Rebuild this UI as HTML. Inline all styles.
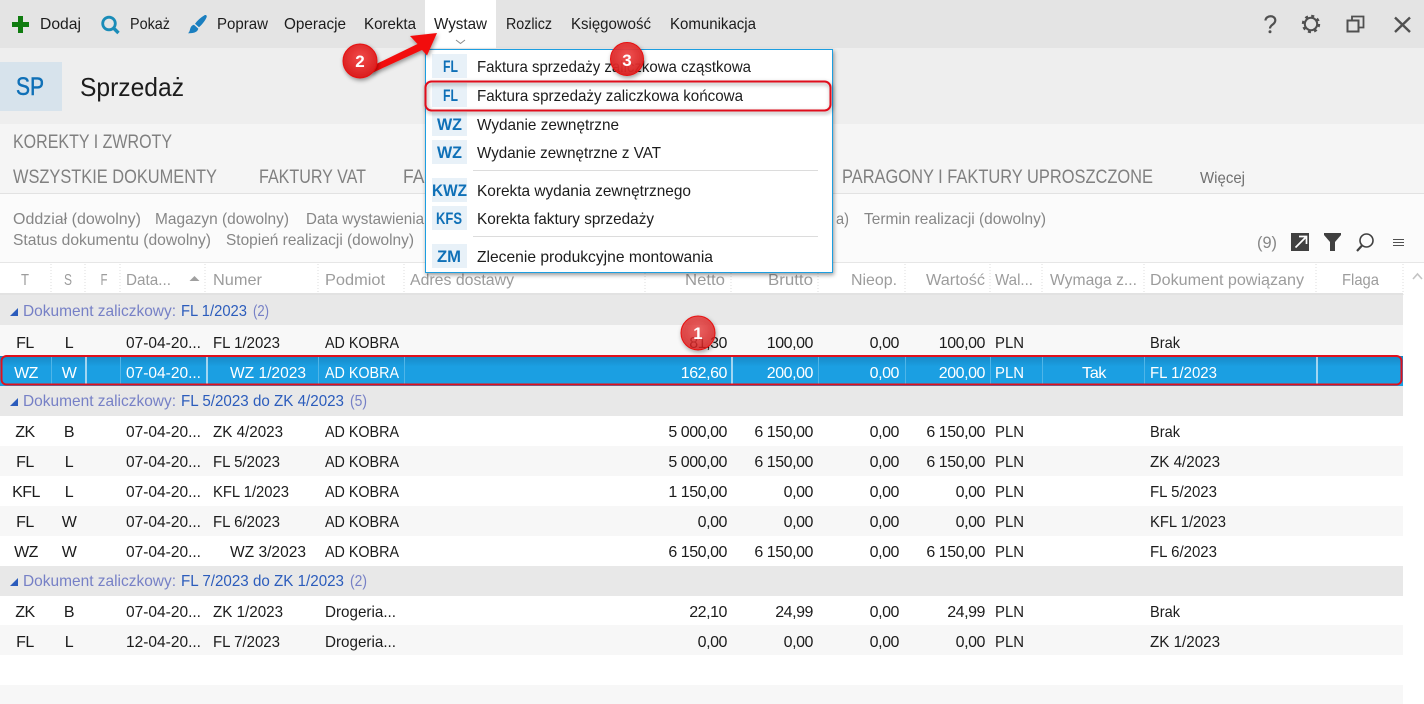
<!DOCTYPE html>
<html lang="pl"><head><meta charset="utf-8"><title>Sprzedaż</title>
<style>
html,body{margin:0;padding:0;background:#fff;overflow:hidden}
svg{display:block;font-family:"Liberation Sans",sans-serif;font-size:16px}
text{fill:#1c1c1c}
.g{fill:#808080;font-size:19px}
.f{fill:#868686;font-size:16px}
.h{fill:#9c9c9c;font-size:16px}
.r{text-anchor:end;letter-spacing:-.45px}
.c{text-anchor:middle;letter-spacing:-.5px}
.w text,text.w{fill:#fff}
.a{fill:#7680c6}
.b{fill:#2b5cbc}
.m{font-size:16px}
.k{fill:#0f70b7;font-weight:bold;font-size:17px;text-anchor:middle}
.s{stroke:#dcdcdc;stroke-dasharray:1 2;stroke-width:1}
.n{fill:#fff;font-weight:bold;font-size:17px;text-anchor:middle}
</style></head><body>
<svg width="1424" height="704" viewBox="0 0 1424 704" xmlns="http://www.w3.org/2000/svg">
<defs>
<linearGradient id="sel" x1="0" y1="0" x2="0" y2="1"><stop offset="0" stop-color="#1788c6"/><stop offset=".35" stop-color="#1b9fe2"/><stop offset="1" stop-color="#1b9fe2"/></linearGradient>
<radialGradient id="red" cx=".5" cy=".4" r=".6"><stop offset="0" stop-color="#f04a4a"/><stop offset="1" stop-color="#d91c1c"/></radialGradient>
<filter id="sh" x="-20%" y="-20%" width="140%" height="140%"><feDropShadow dx="1" dy="2" stdDeviation="2" flood-color="#000" flood-opacity=".4"/></filter>
</defs>
<!-- bands -->
<rect x="0" y="0" width="1424" height="48" fill="#e4e4e4"/>
<rect x="425" y="0" width="71" height="49" fill="#fff"/>
<rect x="0" y="48" width="1424" height="76" fill="#eeeeee"/>
<rect x="0" y="124" width="1424" height="69" fill="#f5f5f5"/>
<rect x="0" y="193" width="1424" height="1" fill="#e2e2e2"/>
<rect x="0" y="194" width="1424" height="68" fill="#fbfbfb"/>
<rect x="0" y="262" width="1424" height="1" fill="#e6e6e6"/>
<rect x="0" y="263" width="1424" height="441" fill="#fff"/>

<!-- toolbar icons -->
<path d="M18 16h5v6h6v5h-6v6h-5v-6h-6v-5h6z" fill="#107c10"/>
<circle cx="109" cy="23.500" r="6.300" fill="none" stroke="#1a8cb8" stroke-width="2.800"/>
<path d="M113.500 28l5 5" stroke="#1a8cb8" stroke-width="3.400" fill="none"/>
<path d="M204.500 15.200c1.600-.6 2.700.6 2.100 2.100-1.600 3.600-4.300 7.200-7.600 10l-4-3.600c2.600-3.500 5.800-6.400 9.500-8.500zM194 24.700l4.300 3.900c-.4 2.700-3.400 4.900-10.300 4.600 2-1.500 1.600-3.300 2.600-5.600.6-1.500 1.800-2.700 3.400-2.900z" fill="#1a7fc0"/>
<!-- toolbar text -->
<text x="40" y="29" textLength="41" lengthAdjust="spacingAndGlyphs">Dodaj</text>
<text x="130" y="29" textLength="40" lengthAdjust="spacingAndGlyphs">Pokaż</text>
<text x="217" y="29" textLength="51" lengthAdjust="spacingAndGlyphs">Popraw</text>
<text x="284" y="29" textLength="62" lengthAdjust="spacingAndGlyphs">Operacje</text>
<text x="364" y="29" textLength="52" lengthAdjust="spacingAndGlyphs">Korekta</text>
<text x="434" y="29" textLength="53" lengthAdjust="spacingAndGlyphs">Wystaw</text>
<text x="506" y="29" textLength="46" lengthAdjust="spacingAndGlyphs">Rozlicz</text>
<text x="571" y="29" textLength="80" lengthAdjust="spacingAndGlyphs">Księgowość</text>
<text x="670" y="29" textLength="86" lengthAdjust="spacingAndGlyphs">Komunikacja</text>
<path d="M456 40l4.500 3.500 4.500-3.500" fill="none" stroke="#8a8a8a"/>
<!-- window icons -->
<path d="M1265.500 20.500c.2-5.500 9.800-5.800 9.800-.2 0 4.500-5.300 4.200-5.300 8.200" fill="none" stroke="#505050" stroke-width="2.200"/>
<circle cx="1270" cy="31.800" r="1.500" fill="#505050"/>
<circle cx="1311" cy="24" r="6.200" fill="none" stroke="#505050" stroke-width="2"/>
<circle cx="1311" cy="24" r="8" fill="none" stroke="#505050" stroke-width="2.400" stroke-dasharray="3 3.280"/>
<rect x="1347.500" y="20.500" width="11" height="11" fill="#e4e4e4" stroke="#505050" stroke-width="2"/>
<path d="M1352 19.500v-3h11.500v11h-4" fill="none" stroke="#505050" stroke-width="1.800"/>
<path d="M1395 17.500l15 14.500M1410 17.500l-15 14.500" stroke="#505050" stroke-width="2.400" fill="none"/>

<!-- title -->
<rect x="0" y="62" width="62" height="49" fill="#d7e3ec"/>
<text x="16" y="95" style="font-size:25px;fill:#0f70b7;stroke:#0f70b7;stroke-width:.5" textLength="28" lengthAdjust="spacingAndGlyphs">SP</text>
<text x="80" y="96" style="font-size:26px" textLength="104" lengthAdjust="spacingAndGlyphs">Sprzedaż</text>

<!-- tabs -->
<text class="g" x="13" y="148" textLength="159" lengthAdjust="spacingAndGlyphs">KOREKTY I ZWROTY</text>
<text class="g" x="13" y="183" textLength="204" lengthAdjust="spacingAndGlyphs">WSZYSTKIE DOKUMENTY</text>
<text class="g" x="259" y="183" textLength="107" lengthAdjust="spacingAndGlyphs">FAKTURY VAT</text>
<text class="g" x="403" y="183" textLength="33" lengthAdjust="spacingAndGlyphs">FAK</text>
<text class="g" x="842" y="183" textLength="311" lengthAdjust="spacingAndGlyphs">PARAGONY I FAKTURY UPROSZCZONE</text>
<text x="1200" y="183" style="fill:#707070" textLength="45" lengthAdjust="spacingAndGlyphs">Więcej</text>

<!-- filters -->
<text class="f" x="13" y="224" textLength="128" lengthAdjust="spacingAndGlyphs">Oddział (dowolny)</text>
<text class="f" x="155" y="224" textLength="134" lengthAdjust="spacingAndGlyphs">Magazyn (dowolny)</text>
<text class="f" x="306" y="224" textLength="118" lengthAdjust="spacingAndGlyphs">Data wystawienia</text>
<text class="f" x="836" y="224" textLength="13" lengthAdjust="spacingAndGlyphs">a)</text>
<text class="f" x="864" y="224" textLength="182" lengthAdjust="spacingAndGlyphs">Termin realizacji (dowolny)</text>
<text class="f" x="13" y="245" textLength="198" lengthAdjust="spacingAndGlyphs">Status dokumentu (dowolny)</text>
<text class="f" x="226" y="245" textLength="188" lengthAdjust="spacingAndGlyphs">Stopień realizacji (dowolny)</text>
<text class="f" x="1257" y="248" style="font-size:17px" textLength="20" lengthAdjust="spacingAndGlyphs">(9)</text>
<rect x="1291" y="233" width="18" height="18" fill="#404040"/>
<path d="M1295.500 247.500l10-10M1299 236.500h7.500v7.500" stroke="#fff" stroke-width="1.700" fill="none"/>
<path d="M1324 233h17v2l-6 7v9h-5v-9l-6-7z" fill="#404040"/>
<circle cx="1366.500" cy="240.500" r="6.500" fill="none" stroke="#404040" stroke-width="1.600"/>
<path d="M1362 245.500l-5 5.500" stroke="#404040" stroke-width="2.200" fill="none"/>
<path d="M1393 239.500h11M1393 242.500h11M1393 245.500h11" stroke="#505050" fill="none"/>

<!-- grid header -->
<text class="h" x="21" y="285" textLength="8" lengthAdjust="spacingAndGlyphs">T</text>
<text class="h" x="64" y="285" textLength="8" lengthAdjust="spacingAndGlyphs">S</text>
<text class="h" x="100.500" y="285" textLength="7" lengthAdjust="spacingAndGlyphs">F</text>
<text class="h" x="126" y="285" textLength="45" lengthAdjust="spacingAndGlyphs">Data...</text>
<path d="M189.500 281l5-5 5 5z" fill="#a0a0a0"/>
<text class="h" x="213" y="285" textLength="49" lengthAdjust="spacingAndGlyphs">Numer</text>
<text class="h" x="325" y="285" textLength="60" lengthAdjust="spacingAndGlyphs">Podmiot</text>
<text class="h" x="410" y="285" textLength="104" lengthAdjust="spacingAndGlyphs">Adres dostawy</text>
<text class="h" x="685" y="285" textLength="40" lengthAdjust="spacingAndGlyphs">Netto</text>
<text class="h" x="768" y="285" textLength="45" lengthAdjust="spacingAndGlyphs">Brutto</text>
<text class="h" x="851" y="285" textLength="46" lengthAdjust="spacingAndGlyphs">Nieop.</text>
<text class="h" x="926" y="285" textLength="59" lengthAdjust="spacingAndGlyphs">Wartość</text>
<text class="h" x="995" y="285" textLength="38" lengthAdjust="spacingAndGlyphs">Wal...</text>
<text class="h" x="1050" y="285" textLength="87" lengthAdjust="spacingAndGlyphs">Wymaga z...</text>
<text class="h" x="1150" y="285" textLength="154" lengthAdjust="spacingAndGlyphs">Dokument powiązany</text>
<text class="h" x="1342" y="285" textLength="37" lengthAdjust="spacingAndGlyphs">Flaga</text>
<path d="M1413 279l4.500-5 4.500 5" fill="none" stroke="#c4c4c4" stroke-width="1.600"/>
<g class="s"><path d="M51 264v31M85 264v31M120 264v31M205 264v31M318 264v31M404 264v31M645 264v31M731 264v31M818 264v31M905 264v31M990 264v31M1042 264v31M1144 264v31M1316 264v31M1403 264v31"/></g>
<rect x="0" y="293" width="1403" height="2" fill="#e2e2e2"/>

<!-- row backgrounds -->
<rect x="0" y="295" width="1403" height="30" fill="#e8e8e8"/>
<rect x="0" y="325" width="1403" height="31" fill="#f8f8f8"/>
<rect x="0" y="356" width="1403" height="30" fill="url(#sel)"/>
<rect x="0" y="386" width="1403" height="30" fill="#e8e8e8"/>
<rect x="0" y="446" width="1403" height="30" fill="#f7f7f7"/>
<rect x="0" y="506" width="1403" height="30" fill="#f7f7f7"/>
<rect x="0" y="566" width="1403" height="30" fill="#e8e8e8"/>
<rect x="0" y="625" width="1403" height="30" fill="#f7f7f7"/>
<rect x="0" y="685" width="1403" height="19" fill="#f7f7f7"/>

<!-- groups -->
<path d="M10 316l8-8v8z" fill="#2b5cbc"/>
<text class="a" x="23" y="316" textLength="153" lengthAdjust="spacingAndGlyphs">Dokument zaliczkowy:</text>
<text class="b" x="181" y="316" textLength="66" lengthAdjust="spacingAndGlyphs">FL 1/2023</text>
<text class="a" x="253" y="316" textLength="16" lengthAdjust="spacingAndGlyphs">(2)</text>
<path d="M10 406l8-8v8z" fill="#2b5cbc"/>
<text class="a" x="23" y="406" textLength="153" lengthAdjust="spacingAndGlyphs">Dokument zaliczkowy:</text>
<text class="b" x="181" y="406" textLength="163" lengthAdjust="spacingAndGlyphs">FL 5/2023 do ZK 4/2023</text>
<text class="a" x="350" y="406" textLength="17" lengthAdjust="spacingAndGlyphs">(5)</text>
<path d="M10 586l8-8v8z" fill="#2b5cbc"/>
<text class="a" x="23" y="586" textLength="153" lengthAdjust="spacingAndGlyphs">Dokument zaliczkowy:</text>
<text class="b" x="181" y="586" textLength="163" lengthAdjust="spacingAndGlyphs">FL 7/2023 do ZK 1/2023</text>
<text class="a" x="350" y="586" textLength="17" lengthAdjust="spacingAndGlyphs">(2)</text>

<!-- row 1 -->
<g>
<text class="c" x="25" y="348">FL</text><text class="c" x="69" y="348">L</text>
<text x="126" y="348" textLength="75" lengthAdjust="spacingAndGlyphs">07-04-20...</text>
<text x="213" y="348" textLength="67" lengthAdjust="spacingAndGlyphs">FL 1/2023</text>
<text x="325" y="348" textLength="74" lengthAdjust="spacingAndGlyphs">AD KOBRA</text>
<text class="r" x="727" y="348">81,30</text><text class="r" x="813" y="348">100,00</text><text class="r" x="899" y="348">0,00</text><text class="r" x="985" y="348">100,00</text>
<text x="995" y="348" textLength="29" lengthAdjust="spacingAndGlyphs">PLN</text>
<text x="1150" y="348" textLength="30" lengthAdjust="spacingAndGlyphs">Brak</text>
</g>
<!-- selected -->
<g class="w">
<text class="c" x="26" y="378">WZ</text><text class="c" x="69" y="378">W</text>
<text x="126" y="378" textLength="75" lengthAdjust="spacingAndGlyphs">07-04-20...</text>
<text x="230" y="378" textLength="76" lengthAdjust="spacingAndGlyphs">WZ 1/2023</text>
<text x="325" y="378" textLength="74" lengthAdjust="spacingAndGlyphs">AD KOBRA</text>
<text class="r" x="727" y="378">162,60</text><text class="r" x="813" y="378">200,00</text><text class="r" x="899" y="378">0,00</text><text class="r" x="985" y="378">200,00</text>
<text x="995" y="378" textLength="29" lengthAdjust="spacingAndGlyphs">PLN</text>
<text class="c" x="1094" y="378" textLength="24" lengthAdjust="spacingAndGlyphs">Tak</text>
<text x="1150" y="378" textLength="67" lengthAdjust="spacingAndGlyphs">FL 1/2023</text>
</g>
<path d="M51.500 357v28M120.500 357v28M318.500 357v28M404.500 357v28M818.500 357v28M905.500 357v28M990.500 357v28M1042.500 357v28M1144.500 357v28" stroke="#4fb5e8" fill="none"/>
<path d="M86 357v28M207 357v28M732 357v28M1317 357v28" stroke="#cfe9f8" stroke-width="1.500" fill="none"/>

<!-- group 2 rows -->
<g>
<text class="c" x="25" y="437">ZK</text><text class="c" x="69" y="437">B</text>
<text x="126" y="437" textLength="75" lengthAdjust="spacingAndGlyphs">07-04-20...</text>
<text x="213" y="437" textLength="70" lengthAdjust="spacingAndGlyphs">ZK 4/2023</text>
<text x="325" y="437" textLength="74" lengthAdjust="spacingAndGlyphs">AD KOBRA</text>
<text class="r" x="727" y="437">5 000,00</text><text class="r" x="813" y="437">6 150,00</text><text class="r" x="899" y="437">0,00</text><text class="r" x="985" y="437">6 150,00</text>
<text x="995" y="437" textLength="29" lengthAdjust="spacingAndGlyphs">PLN</text>
<text x="1150" y="437" textLength="30" lengthAdjust="spacingAndGlyphs">Brak</text>

<text class="c" x="25" y="467">FL</text><text class="c" x="69" y="467">L</text>
<text x="126" y="467" textLength="75" lengthAdjust="spacingAndGlyphs">07-04-20...</text>
<text x="213" y="467" textLength="67" lengthAdjust="spacingAndGlyphs">FL 5/2023</text>
<text x="325" y="467" textLength="74" lengthAdjust="spacingAndGlyphs">AD KOBRA</text>
<text class="r" x="727" y="467">5 000,00</text><text class="r" x="813" y="467">6 150,00</text><text class="r" x="899" y="467">0,00</text><text class="r" x="985" y="467">6 150,00</text>
<text x="995" y="467" textLength="29" lengthAdjust="spacingAndGlyphs">PLN</text>
<text x="1150" y="467" textLength="70" lengthAdjust="spacingAndGlyphs">ZK 4/2023</text>

<text class="c" x="26" y="497">KFL</text><text class="c" x="69" y="497">L</text>
<text x="126" y="497" textLength="75" lengthAdjust="spacingAndGlyphs">07-04-20...</text>
<text x="213" y="497" textLength="76" lengthAdjust="spacingAndGlyphs">KFL 1/2023</text>
<text x="325" y="497" textLength="74" lengthAdjust="spacingAndGlyphs">AD KOBRA</text>
<text class="r" x="727" y="497">1 150,00</text><text class="r" x="813" y="497">0,00</text><text class="r" x="899" y="497">0,00</text><text class="r" x="985" y="497">0,00</text>
<text x="995" y="497" textLength="29" lengthAdjust="spacingAndGlyphs">PLN</text>
<text x="1150" y="497" textLength="67" lengthAdjust="spacingAndGlyphs">FL 5/2023</text>

<text class="c" x="25" y="527">FL</text><text class="c" x="69" y="527">W</text>
<text x="126" y="527" textLength="75" lengthAdjust="spacingAndGlyphs">07-04-20...</text>
<text x="213" y="527" textLength="67" lengthAdjust="spacingAndGlyphs">FL 6/2023</text>
<text x="325" y="527" textLength="74" lengthAdjust="spacingAndGlyphs">AD KOBRA</text>
<text class="r" x="727" y="527">0,00</text><text class="r" x="813" y="527">0,00</text><text class="r" x="899" y="527">0,00</text><text class="r" x="985" y="527">0,00</text>
<text x="995" y="527" textLength="29" lengthAdjust="spacingAndGlyphs">PLN</text>
<text x="1150" y="527" textLength="76" lengthAdjust="spacingAndGlyphs">KFL 1/2023</text>

<text class="c" x="26" y="557">WZ</text><text class="c" x="69" y="557">W</text>
<text x="126" y="557" textLength="75" lengthAdjust="spacingAndGlyphs">07-04-20...</text>
<text x="230" y="557" textLength="76" lengthAdjust="spacingAndGlyphs">WZ 3/2023</text>
<text x="325" y="557" textLength="74" lengthAdjust="spacingAndGlyphs">AD KOBRA</text>
<text class="r" x="727" y="557">6 150,00</text><text class="r" x="813" y="557">6 150,00</text><text class="r" x="899" y="557">0,00</text><text class="r" x="985" y="557">6 150,00</text>
<text x="995" y="557" textLength="29" lengthAdjust="spacingAndGlyphs">PLN</text>
<text x="1150" y="557" textLength="67" lengthAdjust="spacingAndGlyphs">FL 6/2023</text>

<text class="c" x="25" y="617">ZK</text><text class="c" x="69" y="617">B</text>
<text x="126" y="617" textLength="75" lengthAdjust="spacingAndGlyphs">07-04-20...</text>
<text x="213" y="617" textLength="70" lengthAdjust="spacingAndGlyphs">ZK 1/2023</text>
<text x="325" y="617" textLength="71" lengthAdjust="spacingAndGlyphs">Drogeria...</text>
<text class="r" x="727" y="617">22,10</text><text class="r" x="813" y="617">24,99</text><text class="r" x="899" y="617">0,00</text><text class="r" x="985" y="617">24,99</text>
<text x="995" y="617" textLength="29" lengthAdjust="spacingAndGlyphs">PLN</text>
<text x="1150" y="617" textLength="30" lengthAdjust="spacingAndGlyphs">Brak</text>

<text class="c" x="25" y="647">FL</text><text class="c" x="69" y="647">L</text>
<text x="126" y="647" textLength="75" lengthAdjust="spacingAndGlyphs">12-04-20...</text>
<text x="213" y="647" textLength="67" lengthAdjust="spacingAndGlyphs">FL 7/2023</text>
<text x="325" y="647" textLength="71" lengthAdjust="spacingAndGlyphs">Drogeria...</text>
<text class="r" x="727" y="647">0,00</text><text class="r" x="813" y="647">0,00</text><text class="r" x="899" y="647">0,00</text><text class="r" x="985" y="647">0,00</text>
<text x="995" y="647" textLength="29" lengthAdjust="spacingAndGlyphs">PLN</text>
<text x="1150" y="647" textLength="70" lengthAdjust="spacingAndGlyphs">ZK 1/2023</text>
</g>

<!-- selected row outline -->
<rect x="1.500" y="356" width="1400" height="28.500" rx="5" fill="none" stroke="#e0101c" stroke-width="2"/>

<!-- dropdown menu -->
<rect x="425.500" y="49.500" width="407" height="223" fill="#fff" stroke="#1a9ee0" filter="url(#sh)"/>
<g fill="#e8f1f8">
<rect x="432" y="54" width="35" height="24"/><rect x="432" y="83" width="35" height="24"/><rect x="432" y="112" width="35" height="24"/><rect x="432" y="140" width="35" height="24"/><rect x="432" y="178" width="35" height="24"/><rect x="432" y="206" width="35" height="24"/><rect x="432" y="244" width="35" height="24"/>
</g>
<text class="k" x="450.500" y="72" textLength="15" lengthAdjust="spacingAndGlyphs">FL</text><text class="k" x="450.500" y="101" textLength="15" lengthAdjust="spacingAndGlyphs">FL</text><text class="k" x="449.500" y="130" textLength="25" lengthAdjust="spacingAndGlyphs">WZ</text><text class="k" x="449.500" y="158" textLength="25" lengthAdjust="spacingAndGlyphs">WZ</text>
<text class="k" x="449.500" y="196" textLength="35" lengthAdjust="spacingAndGlyphs">KWZ</text><text class="k" x="449" y="224" textLength="26" lengthAdjust="spacingAndGlyphs">KFS</text><text class="k" x="449" y="262" textLength="24" lengthAdjust="spacingAndGlyphs">ZM</text>
<text class="m" x="477" y="72" textLength="274" lengthAdjust="spacingAndGlyphs">Faktura sprzedaży zaliczkowa cząstkowa</text>
<text class="m" x="477" y="101" textLength="266" lengthAdjust="spacingAndGlyphs">Faktura sprzedaży zaliczkowa końcowa</text>
<text class="m" x="477" y="130" textLength="142" lengthAdjust="spacingAndGlyphs">Wydanie zewnętrzne</text>
<text class="m" x="477" y="158" textLength="184" lengthAdjust="spacingAndGlyphs">Wydanie zewnętrzne z VAT</text>
<text class="m" x="477" y="196" textLength="214" lengthAdjust="spacingAndGlyphs">Korekta wydania zewnętrznego</text>
<text class="m" x="477" y="224" textLength="177" lengthAdjust="spacingAndGlyphs">Korekta faktury sprzedaży</text>
<text class="m" x="477" y="262" textLength="236" lengthAdjust="spacingAndGlyphs">Zlecenie produkcyjne montowania</text>
<rect x="473" y="170" width="345" height="1" fill="#dcdcdc"/>
<rect x="473" y="236" width="345" height="1" fill="#dcdcdc"/>
<rect x="425.500" y="81.500" width="405" height="29" rx="6" fill="none" stroke="#e0101c" stroke-width="2" filter="url(#sh)"/>

<!-- annotations -->
<path d="M437 33l-27 3 7.500 8-49.500 24 4 5 50-23 5 5.500z" fill="#f20d0d" filter="url(#sh)"/>
<circle cx="360" cy="61" r="17" fill="url(#red)" stroke="#e81010" filter="url(#sh)"/>
<text class="n" x="360" y="67">2</text>
<circle cx="627" cy="59" r="16.500" fill="url(#red)" fill-opacity=".92" stroke="#e81010" filter="url(#sh)"/>
<text class="n" x="627" y="66">3</text>
<circle cx="698" cy="333" r="17" fill="url(#red)" fill-opacity=".78" stroke="#e81010" filter="url(#sh)"/>
<text class="n" x="698" y="339">1</text>
</svg>
</body></html>
